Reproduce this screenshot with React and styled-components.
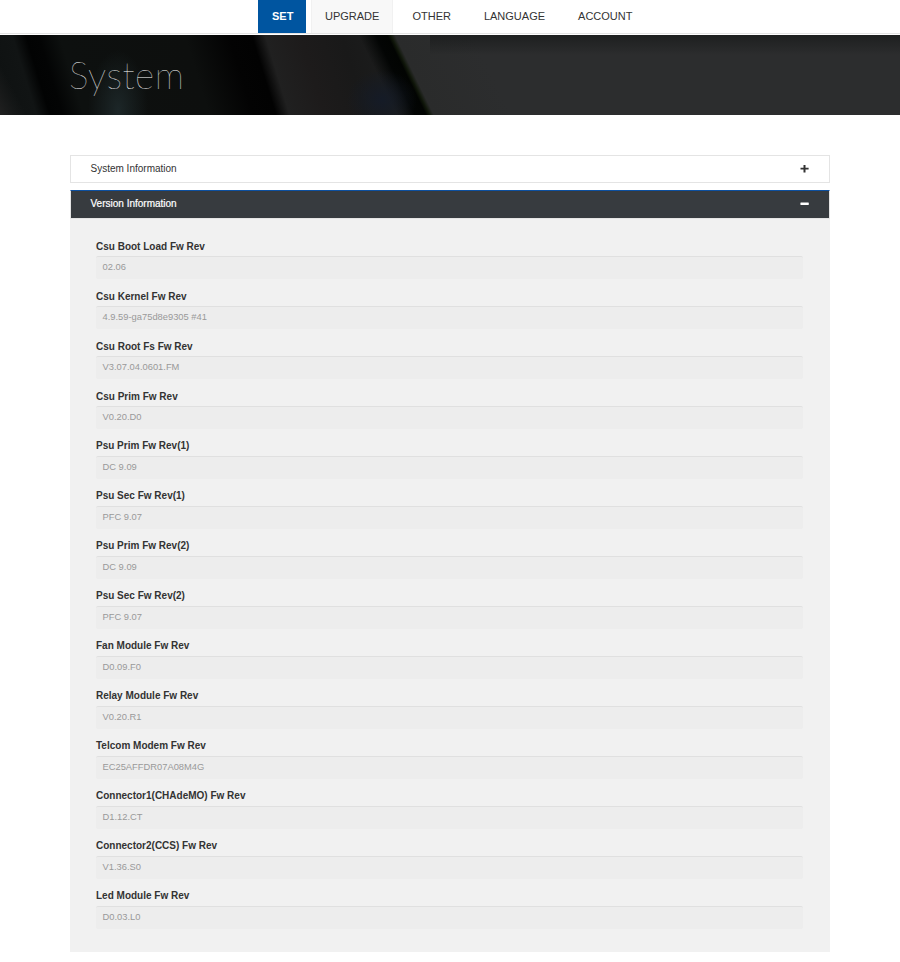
import React from "react";
import styled, { createGlobalStyle, css } from "styled-components";

const GlobalStyle = createGlobalStyle`
  * { box-sizing: border-box; }
  body {
    margin: 0;
    background: #fff;
    color: #333;
    font-family: "Liberation Sans", Arial, sans-serif;
  }
`;

const Page = styled.div`
  width: 900px;
  height: 962px;
  overflow: hidden;
`;

const Nav = styled.nav`
  display: flex;
  gap: 5px;
  height: 35px;
  padding-left: 258px;
  padding-bottom: 1px;
  background: linear-gradient(#e4e4e4, #e4e4e4) 0 33px / 100% 1px no-repeat #fff;
`;

const NavItem = styled.a`
  height: 33px;
  padding: 0 13px;
  border: solid transparent;
  border-width: 0 1px;
  font-size: 11px;
  line-height: 33px;
  color: #333;
  ${({ $state }) => $state === "active" && css`
    width: 48px;
    background: #0055a0;
    color: #fff;
    font-weight: 700;
    border: 0;
    padding: 0 14px;
  `}
  ${({ $state }) => $state === "hover" && css`
    background: #f8f8f8;
    border-color: #f1f1f1;
  `}
`;

const Banner = styled.header`
  display: flex;
  height: 80px;
  padding-left: 69px;
  background:
    linear-gradient(180deg, rgba(12, 14, 14, 0.45), transparent 25%) 430px 0 / 470px 100% no-repeat,
    radial-gradient(ellipse 30px 60px at 118px 75px, rgba(32, 44, 46, 0.8), transparent),
    radial-gradient(ellipse 35px 30px at 382px 65px, rgba(20, 27, 40, 0.9), transparent),
    linear-gradient(62deg, #202020 0, #171919 12px, transparent 24px),
    linear-gradient(64deg, transparent 357px, #030504 373px, #020402 383px, #10170a 386px, #2a2b2b 390px, #2c2d2e 460px, #2c2d2e 100%),
    linear-gradient(73deg, #0e1111 0, #111414 35px, #020303 48px, #030404 60px, #0d100f 80px, #0d0f0e 200px, #030303 242px, #020202 264px, #202020 277px, #1d1b1b 310px, #191919 350px, #1c1d1d 390px, #1c1d1d 100%);
`;

const Title = styled.h1`
  margin: 0;
  color: #fff;
  font-family: Lato, sans-serif;
  font-size: 37px;
  font-weight: 100;
  line-height: 80px;
  letter-spacing: 0.5px;
`;

const Content = styled.main`
  display: flex;
  flex-direction: column;
  width: 760px;
  margin: 40px 0 0 70px;
`;

const PanelHeader = styled.button`
  display: flex;
  align-items: center;
  justify-content: space-between;
  height: 28px;
  padding: 0 20px 2px 19.5px;
  border: 1px solid #e4e4e4;
  background: #fff;
  color: #333;
  font: 10px "Liberation Sans", Arial, sans-serif;
  ${({ $open }) => $open && css`
    height: 29px;
    margin-top: 7px;
    border-top-color: #0d50a0;
    background: #373b3f;
    color: #fff;
    -webkit-text-stroke: 0.2px #fff;
  `}
`;

const ToggleIcon = styled.svg`
  width: 9px;
  height: 9px;
`;

const PanelBody = styled.section`
  display: flex;
  flex-direction: column;
  height: 733px;
  padding: 20px 27px 0 26px;
  background: #f1f1f1;
`;

const Field = styled.div`
  height: 50px;
  padding-top: 1px;
  &:nth-child(n + 5) { padding-top: 0; }
  &:nth-child(n + 5) > label { height: 17px; }
`;

const Label = styled.label`
  display: block;
  height: 16px;
  font-size: 10px;
  font-weight: 700;
  line-height: 14px;
  color: #333;
`;

const Value = styled.div`
  height: 23px;
  padding-left: 6.5px;
  border-top: 1px solid #e0e0e0;
  border-radius: 2px;
  background: #ededed;
  color: #999;
  font-size: 9.35px;
  line-height: 21px;
`;

const navItems = [
  ["SET", "active"],
  ["UPGRADE", "hover"],
  ["OTHER"],
  ["LANGUAGE"],
  ["ACCOUNT"],
];

const versions = [
  ["Csu Boot Load Fw Rev", "02.06"],
  ["Csu Kernel Fw Rev", "4.9.59-ga75d8e9305 #41"],
  ["Csu Root Fs Fw Rev", "V3.07.04.0601.FM"],
  ["Csu Prim Fw Rev", "V0.20.D0"],
  ["Psu Prim Fw Rev(1)", "DC 9.09"],
  ["Psu Sec Fw Rev(1)", "PFC 9.07"],
  ["Psu Prim Fw Rev(2)", "DC 9.09"],
  ["Psu Sec Fw Rev(2)", "PFC 9.07"],
  ["Fan Module Fw Rev", "D0.09.F0"],
  ["Relay Module Fw Rev", "V0.20.R1"],
  ["Telcom Modem Fw Rev", "EC25AFFDR07A08M4G"],
  ["Connector1(CHAdeMO) Fw Rev", "D1.12.CT"],
  ["Connector2(CCS) Fw Rev", "V1.36.S0"],
  ["Led Module Fw Rev", "D0.03.L0"],
];

export default function App() {
  return (
    <Page>
      <GlobalStyle />
      <Nav>
        {navItems.map(([name, state]) => (
          <NavItem key={name} $state={state}>{name}</NavItem>
        ))}
      </Nav>
      <Banner>
        <Title>System</Title>
      </Banner>
      <Content>
        <PanelHeader>
          System Information
          <ToggleIcon viewBox="0 0 9 9">
            <path d="M3.5 1h2v2.7H8.6v1.8H5.5V8.5h-2v-3H.5V3.7h3z" fill="#333" />
          </ToggleIcon>
        </PanelHeader>
        <PanelHeader $open>
          Version Information
          <ToggleIcon viewBox="0 0 9 9">
            <rect x="0.4" y="3.5" width="8.4" height="2.5" rx="0.4" fill="#fff" />
          </ToggleIcon>
        </PanelHeader>
        <PanelBody>
          {versions.map(([label, value]) => (
            <Field key={label}>
              <Label>{label}</Label>
              <Value>{value}</Value>
            </Field>
          ))}
        </PanelBody>
      </Content>
    </Page>
  );
}
